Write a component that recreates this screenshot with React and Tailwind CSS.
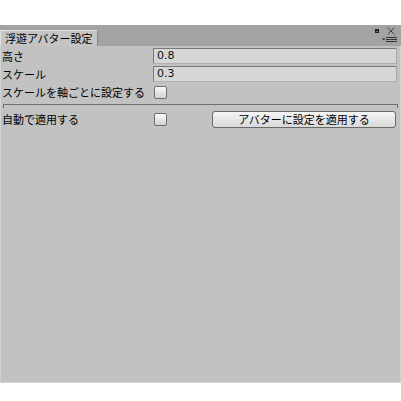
import React from "react";

const jp = { fontFamily: '"Noto Sans CJK JP", "Noto Sans", sans-serif' };

function Checkbox() {
  return (
    <div className="w-[13px] h-[13px] rounded-[2px] border border-[#6e6e6e] bg-gradient-to-b from-[#fbfbfb] to-[#d2d2d2]" />
  );
}

function Field({ value }) {
  return (
    <div className="ml-auto w-[244px] h-[16px] border border-[#7a7a7a] border-r-[#a8a8a8] border-b-[#b0b0b0] bg-[#d6d6d6] flex items-center pl-[3px] text-[11px] text-[#111]" style={{ fontFamily: '"DejaVu Sans", sans-serif' }}>
      {value}
    </div>
  );
}

export default function App() {
  return (
    <div className="w-[401px] h-[401px] bg-white flex flex-col" style={jp}>
      <div className="h-[25px]" />
      <div className="h-[358px] flex flex-col">
        {/* header */}
        <div className="h-[21px] bg-[#a3a3a3] flex items-end relative">
          <div className="h-[16px] w-[98px] bg-[#c4c4c4] border-t border-l border-r border-[#e2e2e2] border-r-[#8a8a8a] rounded-tr-[2px] flex items-center pl-[4px] text-[11px] text-black leading-none">
            浮遊アバター設定
          </div>
          <div className="absolute left-[375px] top-[4px] w-[4px] h-[4px] border border-[#222] border-t-2 bg-[#777]" />
          <svg className="absolute left-[387px] top-[2px]" width="8" height="8" viewBox="0 0 8 8">
            <path d="M0.5 0.5 L7.5 7.5 M7.5 0.5 L0.5 7.5" stroke="#444" strokeWidth="1" />
          </svg>
          <svg className="absolute left-[382px] top-[12px]" width="15" height="6" viewBox="0 0 15 6">
            <path d="M0 1.5 L3.5 1.5 L1.75 3.5 Z" fill="#333" />
            <path d="M4 0.5 H15 M4 2.5 H15 M4 4.5 H15" stroke="#333" strokeWidth="1" />
          </svg>
        </div>
        {/* content */}
        <div className="flex-1 bg-[#c2c2c2] border-l border-r border-b border-[#d2d2d2] flex flex-col pt-[2px] text-[11px] text-black">
          <div className="h-[16px] flex items-center pl-[1px] pr-[3px]">
            <span>高さ</span>
            <Field value="0.8" />
          </div>
          <div className="h-[16px] mt-[2px] flex items-center pl-[1px] pr-[3px]">
            <span>スケール</span>
            <Field value="0.3" />
          </div>
          <div className="h-[16px] mt-[2px] flex items-center pl-[1px] pr-[3px]">
            <span className="w-[152px]">スケールを軸ごとに設定する</span>
            <Checkbox />
          </div>
          <div className="mt-[4px] mx-[2px] h-[4px] flex flex-col">
            <div className="h-[1px] bg-[#6f6f6f]" />
            <div className="flex justify-between">
              <div className="w-[1px] h-[3px] bg-[#6f6f6f]" />
              <div className="w-[1px] h-[3px] bg-[#6f6f6f]" />
            </div>
          </div>
          <div className="h-[17px] mt-[3px] flex items-center pl-[1px] pr-[4px]">
            <span className="w-[152px]">自動で適用する</span>
            <Checkbox />
            <div className="ml-auto w-[184px] h-[17px] rounded-[3px] border border-[#6a6a6a] bg-gradient-to-b from-[#f6f6f6] to-[#d9d9d9] flex items-center justify-center text-[11px] leading-none">
              アバターに設定を適用する
            </div>
          </div>
        </div>
      </div>
    </div>
  );
}
